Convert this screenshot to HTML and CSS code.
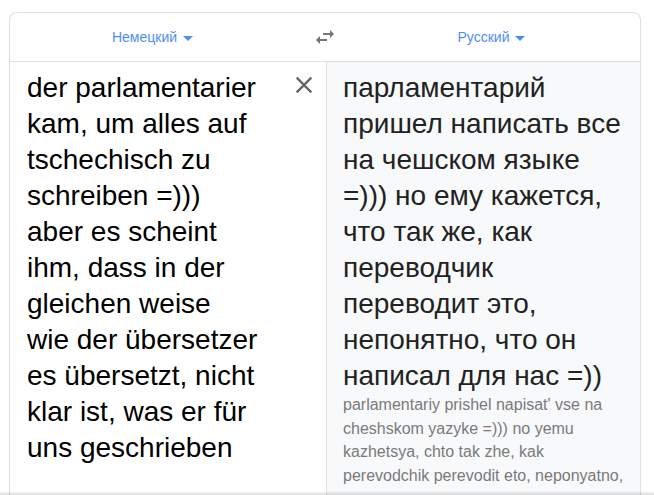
FILE: index.html
```html
<!DOCTYPE html>
<html lang="ru">
<head>
    <meta charset="UTF-8">
    <meta name="viewport" content="width=device-width, initial-scale=1.0">
    <title>Переводчик</title>
    <link rel="stylesheet" href="styles.css">
</head>
    <body>
        <div class="translate-card">
            <div class="lang-bar">
                <button type="button" class="lang-button">Немецкий <span class="caret"></span></button>
                <button type="button" class="swap-button" aria-label="Поменять языки">
                    <svg viewBox="0 0 24 24" width="24" height="24">
                        <path d="M6.99 11L3 15l3.99 4v-3H14v-2H6.99v-3zM21 9l-3.99-4v3H10v2h7.01v3L21 9z" fill="#757575"/>
                    </svg>
                </button>
                <button type="button" class="lang-button">Русский <span class="caret"></span></button>
            </div>
            <div class="panels">
                <div class="source-panel">
                    <div class="source-text">der parlamentarier<br>kam, um alles auf<br>tschechisch zu<br>schreiben =)))<br>aber es scheint<br>ihm, dass in der<br>gleichen weise<br>wie der übersetzer<br>es übersetzt, nicht<br>klar ist, was er für<br>uns geschrieben</div>
                    <button type="button" class="clear-button" aria-label="Очистить">
                        <svg viewBox="0 0 24 24" width="28" height="28">
                            <path d="M19 6.41L17.59 5 12 10.59 6.41 5 5 6.41 10.59 12 5 17.59 6.41 19 12 13.41 17.59 19 19 17.59 13.41 12z" fill="#666"/>
                        </svg>
                    </button>
                </div>
                <div class="result-panel">
                    <div class="result-text">парламентарий<br>пришел написать все<br>на чешском языке<br>=))) но ему кажется,<br>что так же, как<br>переводчик<br>переводит это,<br>непонятно, что он<br>написал для нас =))</div>
                    <div class="translit">parlamentariy prishel napisat' vse na<br>cheshskom yazyke =))) no yemu<br>kazhetsya, chto tak zhe, kak<br>perevodchik perevodit eto, neponyatno,</div>
                </div>
            </div>
        </div>
        <div class="bottom-shadow"></div>
    </body>
</html>
```

FILE: styles.css
```css
:root {
    --blue: #4f8ef7;
    --border: #e0e0e0;
    --panel: #f8f9fa;
    --text: #111;
    --muted: #7a7a7a;
}

body {
    font-family: 'Liberation Sans', Arial, sans-serif;
    margin: 0;
    padding: 12px 13px 0 9px;
    background: white;
    color: var(--text);
    overflow: hidden;
    height: 100vh;
    box-sizing: border-box;
}

.translate-card {
    border: 1px solid var(--border);
    border-bottom: none;
    border-radius: 8px 8px 0 0;
    height: 600px;
    display: flex;
    flex-direction: column;
}

.lang-bar {
    display: flex;
    align-items: center;
    height: 48px;
    border-bottom: 1px solid var(--border);
}

.lang-button {
    flex: 1;
    background: none;
    border: none;
    font-family: inherit;
    font-size: 14px;
    color: var(--blue);
    display: flex;
    align-items: center;
    justify-content: center;
    gap: 6px;
    height: 100%;
    padding: 0 6px 0 0;
    cursor: pointer;
}

.caret {
    width: 0;
    height: 0;
    border-left: 5px solid transparent;
    border-right: 5px solid transparent;
    border-top: 5px solid var(--blue);
    margin-top: 2px;
}

.swap-button {
    width: 48px;
    height: 48px;
    background: none;
    border: none;
    padding: 0;
    display: flex;
    align-items: center;
    justify-content: center;
    cursor: pointer;
}

.panels {
    flex: 1;
    display: flex;
}

.source-panel {
    width: 317px;
    border-right: 1px solid var(--border);
    display: flex;
    padding: 8px 0 0 17px;
    box-sizing: border-box;
}

.source-text {
    flex: 1;
    font-size: 28px;
    line-height: 36px;
    color: #000;
    white-space: nowrap;
}

.clear-button {
    background: none;
    border: none;
    width: 45px;
    height: 32px;
    padding: 0;
    margin-top: -1px;
    display: flex;
    justify-content: center;
    align-items: center;
    align-self: flex-start;
    cursor: pointer;
}

.result-panel {
    flex: 1;
    background: var(--panel);
    padding: 8px 16px 0 16px;
}

.result-text {
    font-size: 28px;
    line-height: 36px;
    color: #222;
    white-space: nowrap;
}

.translit {
    font-size: 16px;
    line-height: 23.7px;
    color: var(--muted);
    margin-top: -1px;
    white-space: nowrap;
}

.bottom-shadow {
    position: fixed;
    left: 0;
    right: 0;
    bottom: 0;
    height: 4px;
    background: linear-gradient(rgba(0,0,0,0), rgba(0,0,0,0.14));
}
```
